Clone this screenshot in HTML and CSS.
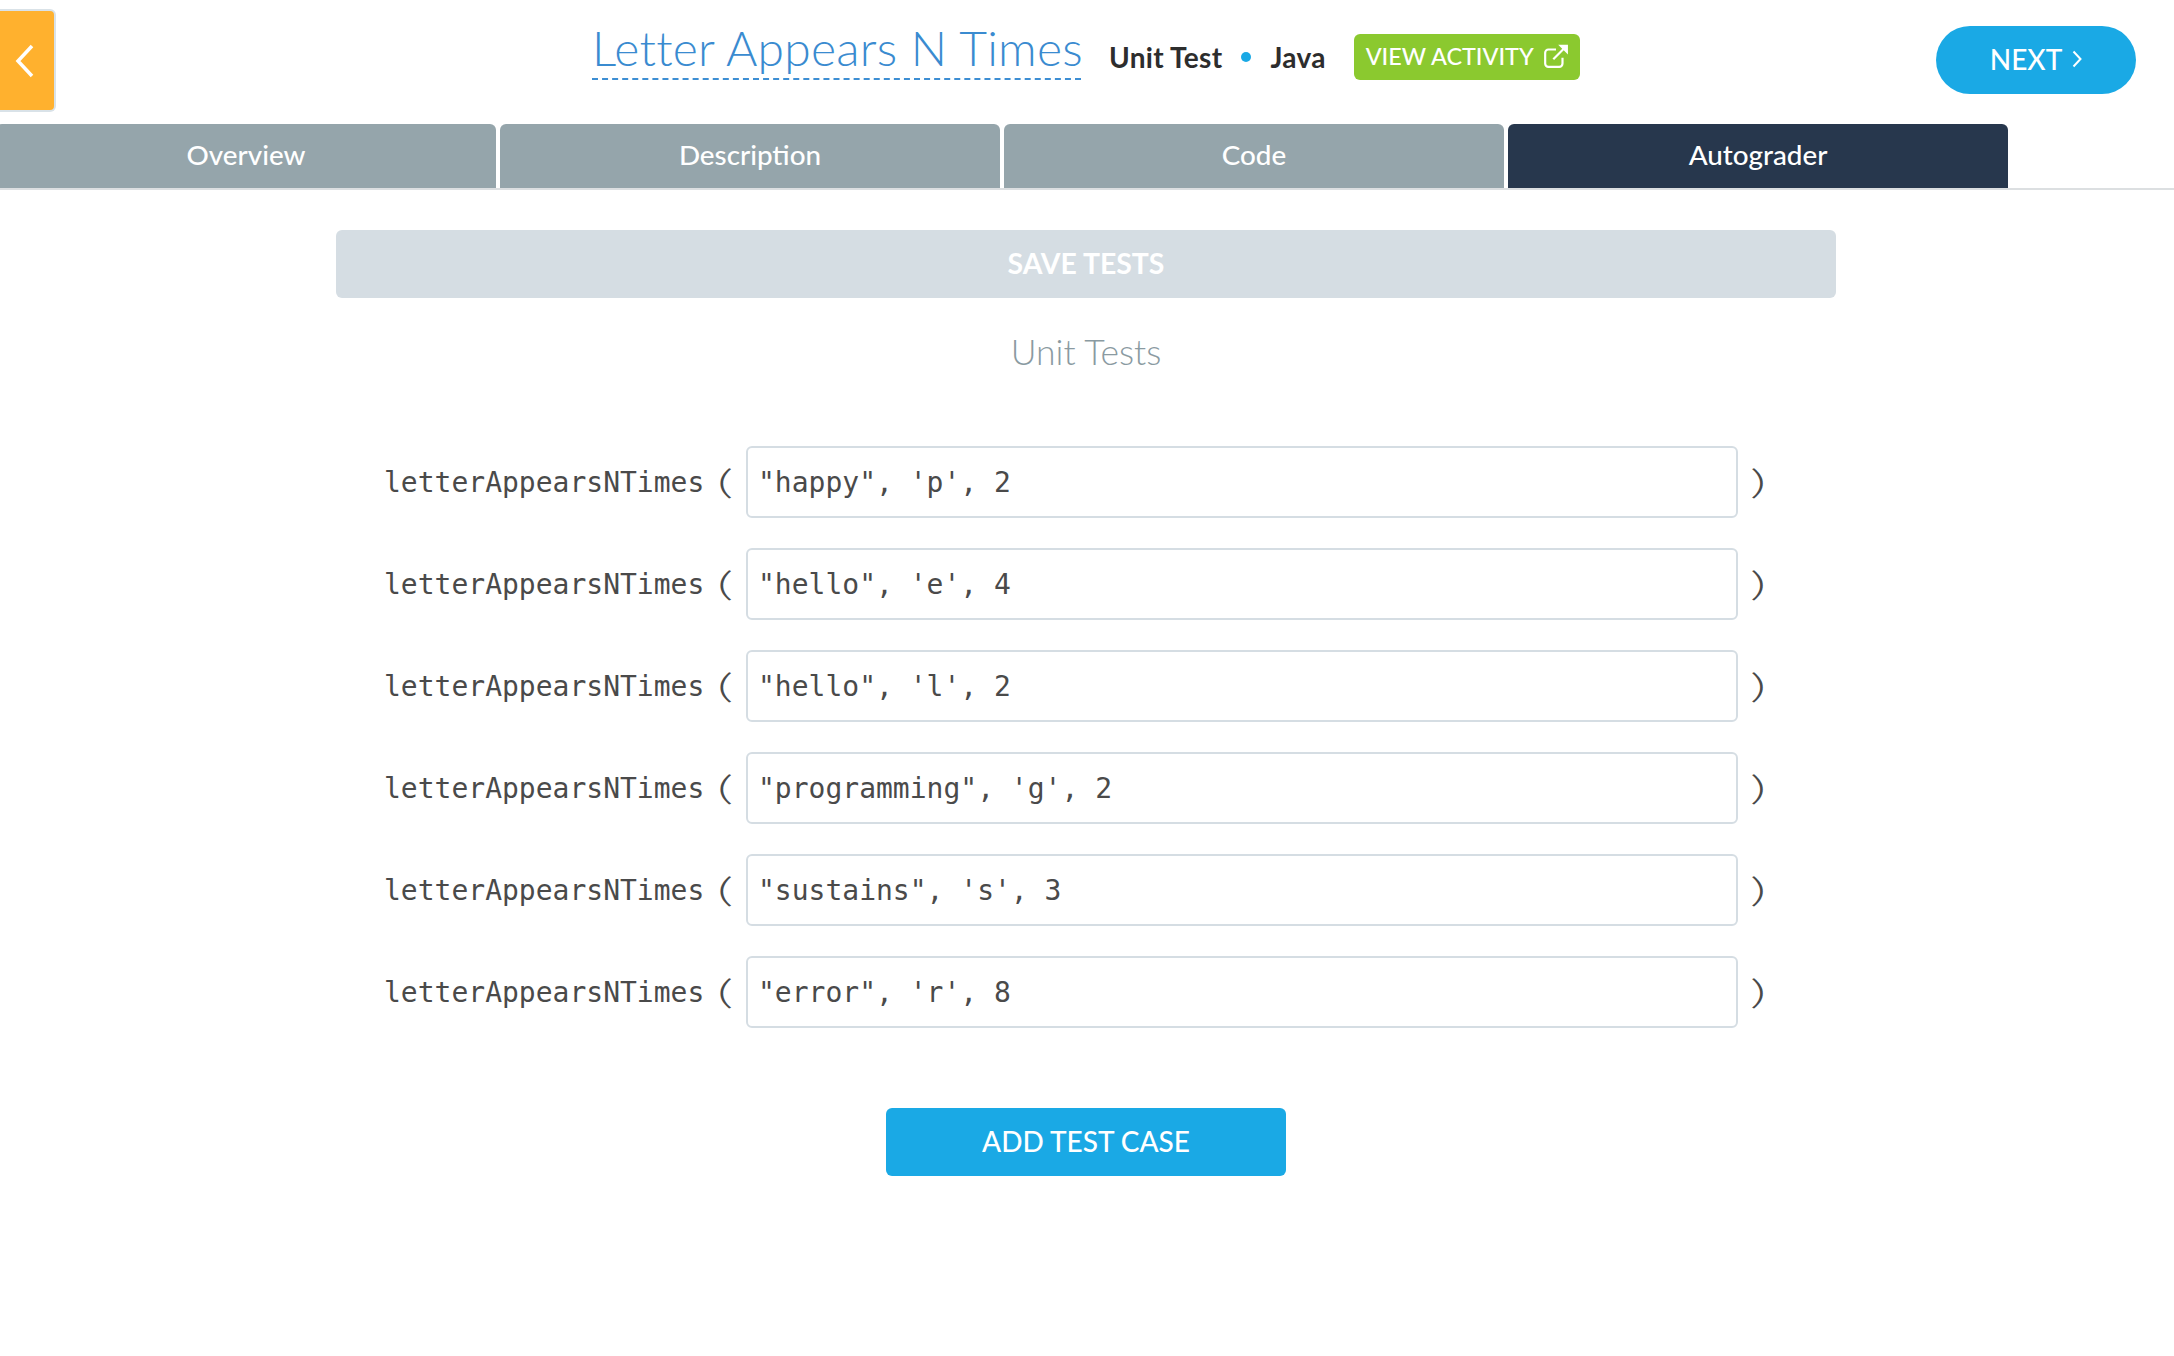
FILE: index.html
```html
<!DOCTYPE html>
<html lang="en">
<head>
<meta charset="utf-8">
<title>Letter Appears N Times</title>
<link rel="stylesheet" href="styles.css">
</head>
<body>
<header class="topbar">
  <a class="back" href="#" aria-label="Back">
    <svg class="back-icon" viewBox="0 0 20 34"><path d="M17 2 3 17l14 15"/></svg>
  </a>
  <h1 class="title">Letter Appears N Times</h1>
  <div class="meta"><span>Unit Test</span><i class="dot"></i><span>Java</span></div>
  <a class="view" href="#">VIEW ACTIVITY
    <svg class="ext-icon" viewBox="0 0 24 24"><path d="M18 13.5V19a3 3 0 0 1-3 3H5a3 3 0 0 1-3-3V9a3 3 0 0 1 3-3h7"/><path d="M9.500 15 21 3.500"/><path class="solid" d="M14 1.500h9v9z"/></svg>
  </a>
  <a class="next" href="#">NEXT
    <svg class="next-icon" viewBox="0 0 10 18"><path d="M1.500 1.500 8.500 9l-7 7.500"/></svg>
  </a>
</header>
<nav class="tabs">
  <a class="tab" href="#">Overview</a>
  <a class="tab" href="#">Description</a>
  <a class="tab" href="#">Code</a>
  <a class="tab active" href="#">Autograder</a>
</nav>
<main class="content">
  <button class="save" type="button">SAVE TESTS</button>
  <h2 class="heading">Unit Tests</h2>
  <div class="cases">
    <div class="case"><span class="fn">letterAppearsNTimes</span><span class="paren">(</span><input class="args" value="&quot;happy&quot;, 'p', 2"><span class="paren">)</span></div>
    <div class="case"><span class="fn">letterAppearsNTimes</span><span class="paren">(</span><input class="args" value="&quot;hello&quot;, 'e', 4"><span class="paren">)</span></div>
    <div class="case"><span class="fn">letterAppearsNTimes</span><span class="paren">(</span><input class="args" value="&quot;hello&quot;, 'l', 2"><span class="paren">)</span></div>
    <div class="case"><span class="fn">letterAppearsNTimes</span><span class="paren">(</span><input class="args" value="&quot;programming&quot;, 'g', 2"><span class="paren">)</span></div>
    <div class="case"><span class="fn">letterAppearsNTimes</span><span class="paren">(</span><input class="args" value="&quot;sustains&quot;, 's', 3"><span class="paren">)</span></div>
    <div class="case"><span class="fn">letterAppearsNTimes</span><span class="paren">(</span><input class="args" value="&quot;error&quot;, 'r', 8"><span class="paren">)</span></div>
  </div>
  <button class="add" type="button">ADD TEST CASE</button>
</main>
</body>
</html>
```
FILE: styles.css
```css
* { box-sizing: border-box; }
html, body { margin: 0; background: #fff; }
body { font-family: Lato, "Open Sans", sans-serif; color: #333; height: 1356px; overflow: hidden; }
a { text-decoration: none; color: inherit; }

.topbar { display: flex; align-items: flex-start; height: 124px; }
.back {
  width: 56px; height: 103px; margin-top: 9px; margin-right: 536px;
  display: flex; align-items: center; padding-left: 15px;
  background: #ffb12e; border: 2px solid #d9e2e8; border-left: 0;
  border-radius: 0 6px 6px 0;
}
.back-icon { width: 20px; height: 34px; fill: none; stroke: #fff; stroke-width: 3.5; }
.title {
  margin: 21px 28px 0 0; height: 59px; width: 489px;
  font-size: 48px; font-weight: 300; line-height: 54px; color: #3a8bd0;
  border-bottom: 2px dashed #3d8ed3; white-space: nowrap; letter-spacing: 0.27px;
}
.meta { display: flex; align-items: center; gap: 19px; margin-top: 40px; height: 34px; font-size: 28px; font-weight: 700; color: #2d2d2d; letter-spacing: 0.3px; }
.dot { width: 10px; height: 10px; border-radius: 50%; background: #1aa9e5; }
.view {
  display: flex; align-items: center; gap: 9px; width: 226px; height: 46px; margin: 34px 0 0 28px;
  padding: 0 0 2px 12px; background: #8bc92f; border-radius: 6px; color: #fff;
  font-size: 23.4px; font-weight: 500; white-space: nowrap;
}
.ext-icon { width: 26px; height: 26px; fill: none; stroke: #fff; stroke-width: 2; }
.ext-icon .solid { fill: #fff; stroke: none; }
.next {
  display: flex; align-items: center; justify-content: center; gap: 10px; width: 200px; height: 68px;
  margin: 26px 38px 0 auto; padding-bottom: 2px; background: #1aa9e5; border-radius: 34px; color: #fff;
  font-size: 28px; font-weight: 500;
}
.next-icon { width: 10px; height: 18px; fill: none; stroke: #fff; stroke-width: 2; }

.tabs { display: flex; gap: 4px; height: 66px; margin-left: -4px; border-bottom: 2px solid #dcdfe1; }
.tab {
  width: 500px; height: 64px; padding-bottom: 4px; display: flex; align-items: center; justify-content: center;
  background: #95a5ab; color: #fff; border-radius: 6px 6px 0 0; font-size: 27.8px; font-weight: 500;
}
.tab.active { background: #27374d; }

.content { width: 1500px; margin: 40px 0 0 336px; display: flex; flex-direction: column; }
.save {
  height: 68px; padding: 0 0 2px; border: 0; border-radius: 6px; background: #d5dde3; color: #fff;
  font: 700 28.400px Lato, sans-serif;
}
.heading { margin: 32px 0 0; height: 44px; text-align: center; font-size: 35.500px; line-height: 44px; font-weight: 300; color: #8a9aa1; }
.cases { display: flex; flex-direction: column; gap: 30px; margin-top: 72px; padding-left: 48px; }
.case { display: flex; align-items: center; height: 72px; color: #4a4a4a; font-family: "DejaVu Sans Mono", monospace; font-size: 28px; }
.fn { width: 333px; white-space: nowrap; }
.paren { display: inline-block; width: 29px; margin-top: -3px; font-family: Lato, sans-serif; font-size: 33px; font-weight: 300; line-height: 36px; transform: scaleX(1.9); transform-origin: left center; }
.args {
  width: 992px; height: 72px; margin-right: 12px; padding: 0 10px;
  border: 2px solid #d5dde3; border-radius: 6px; background: #fff; color: #4a4a4a;
  font: 28px "DejaVu Sans Mono", monospace; outline: 0;
}
.add {
  align-self: center; width: 400px; height: 68px; margin-top: 80px; padding: 0 0 2px; border: 0; border-radius: 6px;
  background: #1aa9e5; color: #fff; font: 500 28px Lato, sans-serif;
}
```
